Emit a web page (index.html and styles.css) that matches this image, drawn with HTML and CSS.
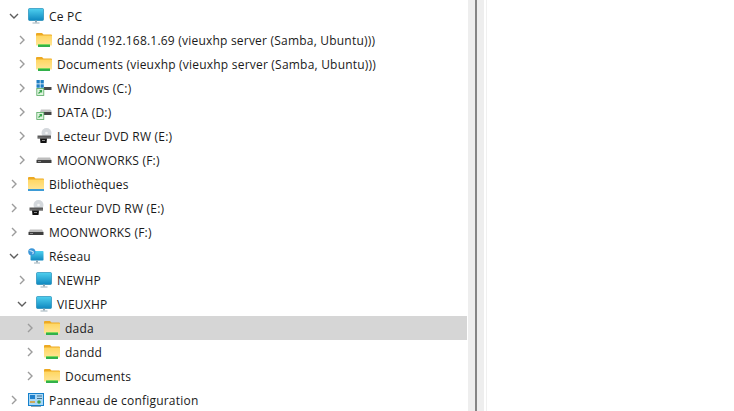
FILE: index.html
```html
<!DOCTYPE html>
<html lang="fr">

<head>
    <meta charset="UTF-8">
    <meta name="viewport" content="width=device-width, initial-scale=1.0">
    <title>Explorateur</title>
    <link rel="stylesheet" href="styles.css">
</head>

<body>
    <!-- Shared icons -->
    <svg class="icon-defs" width="0" height="0">
        <defs>
            <linearGradient id="screen" x1="0" y1="0" x2="0" y2="1">
                <stop offset="0" stop-color="#4fd0ef" />
                <stop offset="1" stop-color="#0f88c0" />
            </linearGradient>
            <linearGradient id="folderBody" x1="0" y1="0" x2="0" y2="1">
                <stop offset="0" stop-color="#ffd661" />
                <stop offset="1" stop-color="#ffe596" />
            </linearGradient>
            <symbol id="ico-open" viewBox="0 0 12 12">
                <path d="M2 4l4 4 4-4" fill="none" stroke="#5e5e5e" stroke-width="1.4" />
            </symbol>
            <symbol id="ico-closed" viewBox="0 0 12 12">
                <path d="M4 2l4 4-4 4" fill="none" stroke="#9c9c9c" stroke-width="1.4" />
            </symbol>
            <symbol id="ico-pc" viewBox="0 0 16 16">
                <rect x="0.5" y="0.500" width="15" height="12" rx="1" fill="url(#screen)" stroke="#0d7fae" stroke-width="0.6" />
                <rect x="7" y="12.500" width="2" height="2" fill="#8fa6b2" />
                <rect x="4.500" y="14.500" width="7" height="1" fill="#9fb2bc" />
            </symbol>
            <symbol id="ico-share" viewBox="0 0 16 16">
                <path d="M0 2a1 1 0 0 1 1-1h5l1.500 1.500H15a1 1 0 0 1 1 1V6H0z" fill="#eda922" />
                <rect x="0" y="3.500" width="16" height="10" rx="0.500" fill="url(#folderBody)" />
                <rect x="2" y="12" width="12" height="3" fill="#32b14a" />
                <rect x="2" y="12" width="12" height="1" fill="#7ed957" />
            </symbol>
            <symbol id="ico-windows" viewBox="0 0 16 16">
                <path d="M0.500 0h3.300v3.500H0.500zM4.500 0h3.300v3.500H4.500zM0.500 4.200h3.300v3.500H0.500zM4.500 4.200h3.300v3.500H4.500z" fill="#1f7fc4" />
                <path d="M8 7h7.500v3H8z" fill="#4a4a4a" />
                <rect x="0.800" y="8.400" width="7" height="7" fill="#dff3df" stroke="#55a860" stroke-width="0.8" />
                <path d="M2.500 13.500l3-3M3.500 10.500h2v2" fill="none" stroke="#3aa64c" stroke-width="1.200" />
            </symbol>
            <symbol id="ico-data" viewBox="0 0 16 16">
                <path d="M5 5.500h9a1.500 1.500 0 0 1 1.500 1.500v1H4z" fill="#c4c4c4" />
                <path d="M8 8h7.500v3H8z" fill="#454545" />
                <rect x="0.800" y="8.400" width="7" height="7" fill="#dff3df" stroke="#55a860" stroke-width="0.800" />
                <path d="M2.500 13.500l3-3M3.500 10.500h2v2" fill="none" stroke="#3aa64c" stroke-width="1.200" />
            </symbol>
            <symbol id="ico-dvd" viewBox="0 0 16 16">
                <circle cx="10.500" cy="5" r="5" fill="#d4d8dc" />
                <circle cx="10.500" cy="5" r="1.300" fill="#f4f4f4" />
                <path d="M1.500 7.500h13.500v2H1.500z" fill="#5a5a5a" />
                <path d="M1.500 9.500h13.500v1H1.500z" fill="#2b2b2b" />
                <path d="M4 10.500h7l-0.500 4.500H4.500z" fill="#111" />
                <rect x="6" y="12" width="3" height="1" fill="#8a8a8a" />
            </symbol>
            <symbol id="ico-drive" viewBox="0 0 16 16">
                <path d="M2 5.500h12l1.500 2.500H0.500z" fill="#bdbdbd" />
                <rect x="0.500" y="8" width="15" height="3" fill="#3f3f3f" />
                <rect x="2" y="9" width="3" height="1" fill="#8e8e8e" />
            </symbol>
            <symbol id="ico-library" viewBox="0 0 16 16">
                <path d="M0 2a1 1 0 0 1 1-1h5l1.500 1.500H15a1 1 0 0 1 1 1V6H0z" fill="#eda922" />
                <rect x="0" y="3.500" width="16" height="10" rx="0.500" fill="url(#folderBody)" />
                <rect x="0" y="13" width="16" height="2" fill="#3d9bd6" />
            </symbol>
            <symbol id="ico-network" viewBox="0 0 16 16">
                <rect x="2.500" y="3" width="13" height="9.500" rx="0.800" fill="url(#screen)" />
                <rect x="8" y="12.500" width="2" height="2" fill="#8fa6b2" />
                <rect x="6" y="14.500" width="6" height="1" fill="#9fb2bc" />
                <circle cx="3.800" cy="3.800" r="3.600" fill="#3b96d8" />
                <path d="M1.500 2.500c1.500 0 2 1 3 1s1 1.500 0 2.500" fill="none" stroke="#cfe9f7" stroke-width="1.100" />
            </symbol>
            <symbol id="ico-panel" viewBox="0 0 16 16">
                <rect x="0.500" y="1.500" width="15" height="12" fill="#a9d8f6" stroke="#1580cc" />
                <rect x="2" y="3" width="5" height="4" fill="#1f80cc" />
                <path d="M9 4h5M9 6.500h5" stroke="#45708c" />
                <path d="M2 10h5" stroke="#d99a25" stroke-width="1.500" />
                <circle cx="11" cy="10" r="1.800" fill="#3f9f4a" />
                <rect x="3" y="14" width="10" height="1" fill="#8fa6b2" />
            </symbol>
        </defs>
    </svg>

    <div class="window">
        <nav class="tree">
            <div class="row level-1">
                <svg class="chevron"><use href="#ico-open" /></svg>
                <svg class="icon"><use href="#ico-pc" /></svg>
                <span>Ce PC</span>
            </div>
            <div class="row level-2">
                <svg class="chevron"><use href="#ico-closed" /></svg>
                <svg class="icon"><use href="#ico-share" /></svg>
                <span>dandd (192.168.1.69 (vieuxhp server (Samba, Ubuntu)))</span>
            </div>
            <div class="row level-2">
                <svg class="chevron"><use href="#ico-closed" /></svg>
                <svg class="icon"><use href="#ico-share" /></svg>
                <span>Documents (vieuxhp (vieuxhp server (Samba, Ubuntu)))</span>
            </div>
            <div class="row level-2">
                <svg class="chevron"><use href="#ico-closed" /></svg>
                <svg class="icon"><use href="#ico-windows" /></svg>
                <span>Windows (C:)</span>
            </div>
            <div class="row level-2">
                <svg class="chevron"><use href="#ico-closed" /></svg>
                <svg class="icon"><use href="#ico-data" /></svg>
                <span>DATA (D:)</span>
            </div>
            <div class="row level-2">
                <svg class="chevron"><use href="#ico-closed" /></svg>
                <svg class="icon"><use href="#ico-dvd" /></svg>
                <span>Lecteur DVD RW (E:)</span>
            </div>
            <div class="row level-2">
                <svg class="chevron"><use href="#ico-closed" /></svg>
                <svg class="icon"><use href="#ico-drive" /></svg>
                <span>MOONWORKS (F:)</span>
            </div>
            <div class="row level-1">
                <svg class="chevron"><use href="#ico-closed" /></svg>
                <svg class="icon"><use href="#ico-library" /></svg>
                <span>Bibliothèques</span>
            </div>
            <div class="row level-1">
                <svg class="chevron"><use href="#ico-closed" /></svg>
                <svg class="icon"><use href="#ico-dvd" /></svg>
                <span>Lecteur DVD RW (E:)</span>
            </div>
            <div class="row level-1">
                <svg class="chevron"><use href="#ico-closed" /></svg>
                <svg class="icon"><use href="#ico-drive" /></svg>
                <span>MOONWORKS (F:)</span>
            </div>
            <div class="row level-1">
                <svg class="chevron"><use href="#ico-open" /></svg>
                <svg class="icon"><use href="#ico-network" /></svg>
                <span>Réseau</span>
            </div>
            <div class="row level-2">
                <svg class="chevron"><use href="#ico-closed" /></svg>
                <svg class="icon"><use href="#ico-pc" /></svg>
                <span>NEWHP</span>
            </div>
            <div class="row level-2">
                <svg class="chevron"><use href="#ico-open" /></svg>
                <svg class="icon"><use href="#ico-pc" /></svg>
                <span>VIEUXHP</span>
            </div>
            <div class="row level-3 selected">
                <svg class="chevron"><use href="#ico-closed" /></svg>
                <svg class="icon"><use href="#ico-share" /></svg>
                <span>dada</span>
            </div>
            <div class="row level-3">
                <svg class="chevron"><use href="#ico-closed" /></svg>
                <svg class="icon"><use href="#ico-share" /></svg>
                <span>dandd</span>
            </div>
            <div class="row level-3">
                <svg class="chevron"><use href="#ico-closed" /></svg>
                <svg class="icon"><use href="#ico-share" /></svg>
                <span>Documents</span>
            </div>
            <div class="row level-1">
                <svg class="chevron"><use href="#ico-closed" /></svg>
                <svg class="icon"><use href="#ico-panel" /></svg>
                <span>Panneau de configuration</span>
            </div>
        </nav>

        <!-- Scrollbar between the tree and the content pane -->
        <div class="scrollbar">
            <div class="scrollbar-thumb"></div>
        </div>
        <main class="content"></main>
    </div>
</body>

</html>
```

FILE: styles.css
```css
* {
    margin: 0;
    padding: 0;
    box-sizing: border-box;
}

body {
    font-family: "Open Sans", "Noto Sans", sans-serif;
    font-size: 12px;
    letter-spacing: 0.21px;
    color: #1a1a1a;
    background-color: white;
    height: 100vh;
    overflow: hidden;
}

.icon-defs {
    display: block;
    height: 0;
}

.window {
    display: flex;
    height: 100vh;
    overflow: hidden;
}

.tree {
    width: 468px;
    padding: 4px 1px 0 0;
    flex-shrink: 0;
}

.row {
    display: flex;
    align-items: center;
    height: 24px;
    white-space: nowrap;
}

.level-1 {
    padding-left: 8px;
}

.level-2 {
    padding-left: 16px;
}

.level-3 {
    padding-left: 24px;
}

.selected {
    background-color: #d6d6d6;
}

.chevron {
    width: 12px;
    height: 12px;
    margin-right: 8px;
    flex-shrink: 0;
}

.icon {
    width: 16px;
    height: 16px;
    margin-right: 5px;
    flex-shrink: 0;
}

.scrollbar {
    width: 16px;
    background-color: #eeeeee;
    display: flex;
    justify-content: center;
    flex-shrink: 0;
}

.scrollbar-thumb {
    width: 2px;
    background-color: #858585;
}

.content {
    flex: 1;
    margin-left: 2px;
    border-left: 1px solid #f0f0f0;
}
```
